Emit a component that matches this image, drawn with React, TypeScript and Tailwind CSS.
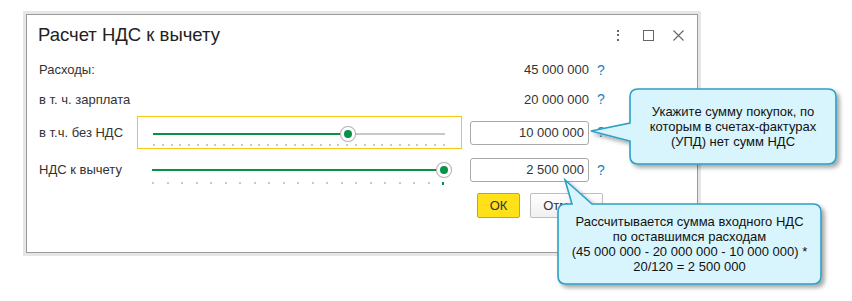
import React from "react";

const FONT = { fontFamily: '"Liberation Sans", Arial, sans-serif' };

function Slider({
  value,
  dots,
  dotTop,
  lastGreen,
}: {
  value: number;
  dots: number;
  dotTop: number;
  lastGreen?: boolean;
}) {
  const w = 292;
  const x = Math.round(value * w);
  return (
    <div className="relative w-[292px] h-[30px]">
      <div className="absolute left-0 right-0 top-[9px] h-[2px] bg-[#c8c8c8]" />
      <div className="absolute left-0 top-[9px] h-[2px] bg-[#0a9147]" style={{ width: x }} />
      <div className="absolute left-0 right-0 flex justify-between" style={{ top: dotTop }}>
        {Array.from({ length: dots }).map((_, i) =>
          lastGreen && i === dots - 1 ? (
            <div key={i} className="w-[2px] h-[3px] bg-[#0a9147]" />
          ) : (
            <div key={i} className="w-[2px] h-[2px] bg-[#c9c9c9]" />
          )
        )}
      </div>
      <div
        className="absolute top-[2px] w-[16px] h-[16px] rounded-full border border-[#b4b4b4] bg-white flex items-center justify-center shadow-[0_0_1px_rgba(0,0,0,0.2)]"
        style={{ left: x - 8 }}
      >
        <div className="w-[8px] h-[8px] rounded-full bg-[#0a9147]" />
      </div>
    </div>
  );
}

function Q() {
  return <span className="ml-[8px] text-[14px] text-[#1b7fc4] w-[10px]">?</span>;
}

export default function App() {
  return (
    <div className="relative w-[852px] h-[301px] bg-white overflow-hidden text-[#333]" style={FONT}>
      {/* tiny tick at top */}
      <div className="absolute left-[344px] top-[12px] w-[1px] h-[3px] bg-[#333]" />

      {/* dialog window */}
      <div className="absolute left-[23px] top-[11px] w-[678px] h-[245px] bg-[#e6e6e6] p-[3px]">
        <div className="w-full h-full bg-white border border-[#9a9a9a] flex flex-col">
          {/* title row */}
          <div className="h-[40px] flex items-center justify-between pl-[11px] pr-[13px]">
            <span className="text-[18.5px] text-[#222]">Расчет НДС к вычету</span>
            <div className="flex items-center">
              <div className="flex flex-col gap-[2.5px] items-center w-[4px]">
                <div className="w-[2px] h-[2px] bg-[#666]" />
                <div className="w-[2px] h-[2px] bg-[#666]" />
                <div className="w-[2px] h-[2px] bg-[#666]" />
              </div>
              <div className="ml-[23px] w-[11px] h-[11px] border border-[#666]" />
              <svg className="ml-[19px]" width="11" height="11" viewBox="0 0 11 11">
                <path d="M0.5 0.5 L10.5 10.5 M10.5 0.5 L0.5 10.5" stroke="#666" strokeWidth="1.1" />
              </svg>
            </div>
          </div>

          <div className="pl-[12px] flex flex-col text-[13px]">
            {/* row 1 */}
            <div className="h-[30px] flex items-center">
              <span className="w-[98px]">Расходы:</span>
              <span className="w-[333px]" />
              <span className="w-[119px] text-right">45 000 000</span>
              <Q />
            </div>
            {/* row 2 */}
            <div className="h-[29px] flex items-center">
              <span className="w-[98px]">в т. ч. зарплата</span>
              <span className="w-[333px]" />
              <span className="w-[119px] text-right">20 000 000</span>
              <Q />
            </div>
            {/* row 3 */}
            <div className="mt-[2px] h-[33px] flex items-center">
              <span className="w-[98px]">в т.ч. без НДС</span>
              <div className="w-[325px] h-[33px] border border-[#f6c611] pl-[15px] pt-[7px]">
                <Slider value={0.668} dots={34} dotTop={20} />
              </div>
              <div className="ml-[8px] w-[119px] h-[24px] rounded-[3px] border border-[#a9a9a9] flex items-center justify-end pr-[4px]">
                10 000 000
              </div>
              <Q />
            </div>
            {/* row 4 */}
            <div className="mt-[4px] h-[34px] flex items-center">
              <span className="w-[98px]">НДС к вычету</span>
              <div className="w-[325px] h-[34px] border border-transparent pl-[14px] pt-[6px]">
                <Slider value={1} dots={21} dotTop={22} lastGreen />
              </div>
              <div className="ml-[8px] w-[119px] h-[24px] rounded-[3px] border border-[#a9a9a9] flex items-center justify-end pr-[4px]">
                2 500 000
              </div>
              <Q />
            </div>
            {/* buttons */}
            <div className="mt-[6px] h-[25px] flex items-center">
              <div className="w-[438px]" />
              <button className="w-[43px] h-[25px] rounded-[2px] border border-[#c8a900] bg-[#ffe11a] text-[13px] text-[#333] flex items-center justify-center">
                ОК
              </button>
              <button className="ml-[10px] w-[73px] h-[25px] rounded-[2px] border border-[#bdbdbd] bg-gradient-to-b from-white to-[#f0f0f0] text-[13px] text-[#333] flex items-center justify-center">
                Отмена
              </button>
            </div>
          </div>
        </div>
      </div>

      {/* callouts */}
      <svg className="absolute left-0 top-0 pointer-events-none" width="852" height="301" viewBox="0 0 852 301">
        <defs>
          <filter id="sh" x="-10%" y="-10%" width="130%" height="140%">
            <feDropShadow dx="3" dy="3" stdDeviation="2" floodColor="#000" floodOpacity="0.35" />
          </filter>
        </defs>
        <path
          d="M 638 89 H 828 Q 836 89 836 97 V 156 Q 836 164 828 164 H 638 Q 630 164 630 156 V 141 L 591 131 L 630 123 V 97 Q 630 89 638 89 Z"
          fill="#d8f5fd"
          stroke="#2e9fc5"
          strokeWidth="1.6"
          filter="url(#sh)"
        />
        <path
          d="M 566 204 H 572 L 565 180 L 592 204 H 813 Q 821 204 821 212 V 276 Q 821 284 813 284 H 566 Q 558 284 558 276 V 212 Q 558 204 566 204 Z"
          fill="#d8f5fd"
          stroke="#2e9fc5"
          strokeWidth="1.6"
          filter="url(#sh)"
        />
      </svg>
      <div className="absolute left-[630px] top-[89px] w-[206px] h-[75px] flex items-center justify-center text-center text-[13px] leading-[15px] text-[#111]">
        <div>
          Укажите сумму покупок, по
          <br />
          которым в счетах-фактурах
          <br />
          (УПД) нет сумм НДС
        </div>
      </div>
      <div className="absolute left-[558px] top-[204px] w-[263px] h-[80px] flex items-center justify-center text-center text-[13px] leading-[15px] text-[#111]">
        <div>
          Рассчитывается сумма входного НДС
          <br />
          по оставшимся расходам
          <br />
          (45 000 000 - 20 000 000 - 10 000 000) *
          <br />
          20/120 = 2 500 000
        </div>
      </div>
    </div>
  );
}
